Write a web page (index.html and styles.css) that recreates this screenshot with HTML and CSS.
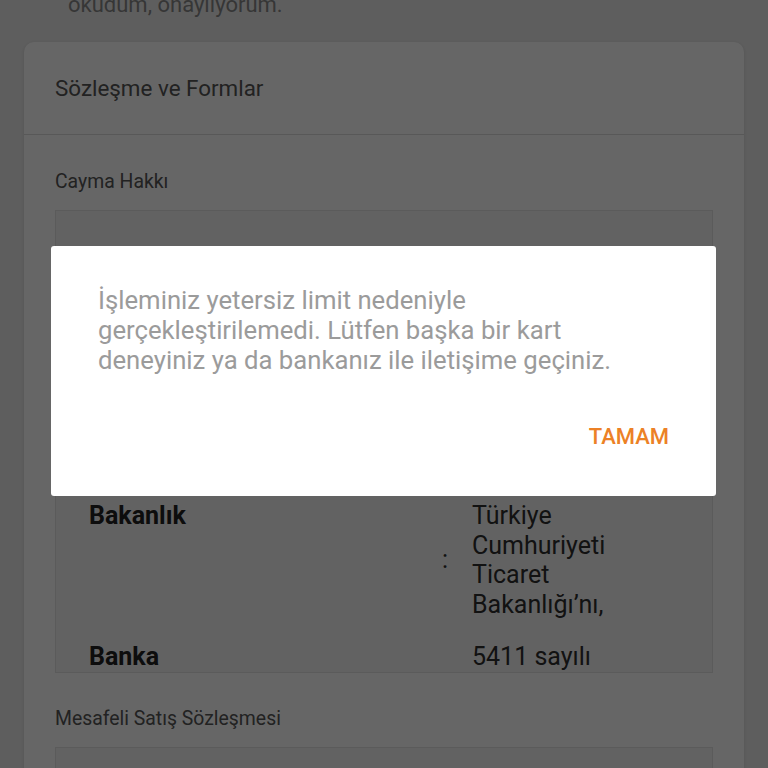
FILE: index.html
```html
<!DOCTYPE html>
<html lang="tr">
<head>
    <meta charset="UTF-8">
    <meta name="viewport" content="width=device-width, initial-scale=1.0">
    <title>Sözleşme ve Formlar</title>
    <link rel="stylesheet" href="styles.css">
</head>
<body>
    <div class="page">
        <p class="consent">okudum, onaylıyorum.</p>

        <section class="card">
            <header class="card-header">Sözleşme ve Formlar</header>
            <div class="card-body">
                <label class="doc-label">Cayma Hakkı</label>
                <div class="doc-box">
                    <div class="doc-scroll">
                        <div class="doc-row">
                            <span class="doc-key">Bakanlık</span>
                            <span class="doc-colon">:</span>
                            <span class="doc-value">Türkiye Cumhuriyeti Ticaret Bakanlığı’nı,</span>
                        </div>
                        <div class="doc-row">
                            <span class="doc-key">Banka</span>
                            <span class="doc-colon">:</span>
                            <span class="doc-value">5411 sayılı Bankacılık Kanunu uyarınca kurulan kredi kuruluşlarını,</span>
                        </div>
                    </div>
                </div>

                <label class="doc-label">Mesafeli Satış Sözleşmesi</label>
                <div class="doc-box"></div>
            </div>
        </section>
    </div>

    <div class="backdrop">
        <div class="dialog" role="alertdialog">
            <p class="dialog-text">İşleminiz yetersiz limit nedeniyle gerçekleştirilemedi. Lütfen başka bir kart deneyiniz ya da bankanız ile iletişime geçiniz.</p>
            <div class="dialog-actions">
                <button class="dialog-btn" type="button">TAMAM</button>
            </div>
        </div>
    </div>
</body>
</html>
```

FILE: styles.css
```css
:root {
    --page-bg: #ececec;
    --card-bg: #ffffff;
    --box-bg: #f6f6f6;
    --line-color: #dcdcdc;
    --title-color: #555555;
    --text-color: #2e2e2e;
    --muted-text: #9b9b9b;
    --accent: #ec8126;
}

*, *::before, *::after {
    box-sizing: border-box;
}

html, body {
    height: 100%;
}

body {
    margin: 0;
    overflow: hidden;
    background-color: var(--page-bg);
    font-family: Roboto, "Noto Sans", "Liberation Sans", sans-serif;
    color: var(--text-color);
}

.page {
    margin-top: -10px;
}

.consent {
    margin: 0;
    padding-left: 68px;
    font-size: 22px;
    line-height: 30px;
    color: #888888;
}

/* ----- Card ----- */
.card {
    margin: 22px 24px 0;
    background-color: var(--card-bg);
    border-radius: 10px;
    box-shadow: 0 1px 4px rgba(0, 0, 0, 0.12);
}

.card-header {
    height: 93px;
    display: flex;
    align-items: center;
    padding: 0 31px 0;
    font-size: 22.4px;
    color: var(--title-color);
    border-bottom: 1px solid var(--line-color);
}

.card-body {
    padding: 35px 31px 0;
}

.doc-label {
    display: block;
    font-size: 19.4px;
    line-height: 24px;
    color: var(--title-color);
    margin-bottom: 16px;
}

.doc-box {
    height: 463px;
    overflow: hidden;
    background-color: var(--box-bg);
    border: 1px solid #e4e4e4;
    margin-bottom: 34px;
}

.doc-scroll {
    padding: 279px 33px 0;
}

.doc-row {
    display: flex;
    align-items: flex-start;
    padding: 11px 0 12px;
    font-size: 25px;
    line-height: 29.5px;
}

.doc-key {
    width: 351px;
    font-weight: 700;
    color: #222222;
}

.doc-colon {
    align-self: center;
    width: 32px;
    padding-left: 2px;
}

.doc-value {
    width: 185px;
    color: var(--text-color);
}

/* ----- Alert dialog ----- */
.backdrop {
    position: fixed;
    inset: 0;
    background-color: rgba(0, 0, 0, 0.6);
    padding: 246px 0 0 51px;
}

.dialog {
    width: 665px;
    height: 250px;
    background-color: #ffffff;
    border-radius: 3px;
    padding: 39px 47px 0;
}

.dialog-text {
    margin: 0;
    max-width: 540px;
    font-size: 25.7px;
    line-height: 30px;
    color: var(--muted-text);
}

.dialog-actions {
    display: flex;
    justify-content: flex-end;
    margin-top: 50px;
}

.dialog-btn {
    border: none;
    background: none;
    padding: 0;
    font-family: inherit;
    font-size: 22px;
    font-weight: 500;
    line-height: 24px;
    color: var(--accent);
    cursor: pointer;
}
```
